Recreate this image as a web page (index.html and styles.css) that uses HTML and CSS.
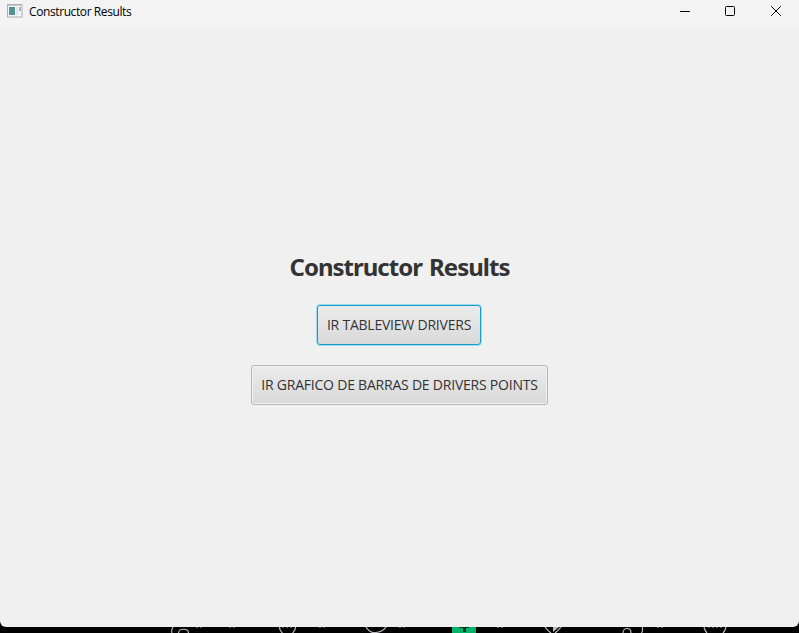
FILE: index.html
```html
<!DOCTYPE html>
<html lang="es">
<head>
<meta charset="utf-8">
<title>Constructor Results</title>
<link rel="stylesheet" href="styles.css">
</head>
<body>
<div class="window">
  <header class="titlebar">
    <svg class="app-icon" width="16" height="14" viewBox="0 0 16 14">
      <rect x=".5" y=".5" width="14.5" height="12.5" fill="#f4f6f7" stroke="#a9b0b5"/>
      <path d="M1 1.5h13.5" stroke="#c3c9cd"/>
      <rect x="2" y="3" width="6" height="8" fill="#4d9390"/>
      <path d="M2 3h2v8H2z" fill="#5c8fa5"/>
      <path d="M9 3h2v8H9z" fill="#dce6ec"/>
      <path d="M12 3h2v4h-2z" fill="#a8b4c0"/>
    </svg>
    <span class="title">Constructor Results</span>
    <div class="controls">
      <svg width="46" height="23" viewBox="0 0 46 23"><path d="M18 11.500h10" stroke="#000"/></svg>
      <svg width="46" height="23" viewBox="0 0 46 23"><rect x="17.500" y="6.500" width="9" height="9" rx="1" fill="none" stroke="#000"/></svg>
      <svg width="46" height="23" viewBox="0 0 46 23"><path d="M17.200 6.200l9.600 9.600M26.800 6.200l-9.600 9.600" stroke="#000"/></svg>
    </div>
  </header>
  <main class="content">
    <h1 class="heading">Constructor Results</h1>
    <button class="btn btn-focused"><span class="label">IR TABLEVIEW DRIVERS</span></button>
    <button class="btn btn-wide"><span class="label">IR GRAFICO DE BARRAS DE DRIVERS POINTS</span></button>
  </main>
</div>
<svg class="backdrop" width="799" height="6" viewBox="0 0 799 6">
  <path fill="#00b56a" d="M452 0h24v6h-24z"/>
  <path fill="#06391f" d="M463 0h3v5h-3zM459 0h10v1h-10z"/>
  <g fill="none" stroke="#b9bcbc" stroke-width="1.200">
    <path d="M173 0q-2 3-1 6M178.500 6c0-5 10-5 10 0M279.500 0q0 4 3 6M295.500 0q0 4-3 6M366 0c3 5 7 6 10 5.500 4-.5 8-2 10-5.500M545 0q3 4 6 6M561 0q-3 4-6 6M623 6c0-6 8-6 8 0M642.500 0v4l-1 2M704 0q1 4 3 6M726 0q-1 4-3 6"/>
    <path stroke="#555" stroke-dasharray="2 2" d="M282 .5h11M196 .5h6M229 .5h8M319 .5h8M399 .5h8M497 .5h8M657 .5h8M708 .5h14"/>
  </g>
  <path fill="#b9bcbc" d="M553 0h6l-6 5z"/>
</svg>
</body>
</html>
```
FILE: styles.css
```css
* { box-sizing: border-box; }
body {
  margin: 0;
  width: 799px;
  height: 633px;
  overflow: hidden;
  background: #000;
  font-family: "Noto Sans", sans-serif;
}
.window {
  height: 627px;
  display: flex;
  flex-direction: column;
  overflow: hidden;
  background: #f0f0f0;
  border-radius: 0 0 6px 6px;
}
.titlebar {
  flex: none;
  height: 28px;
  display: flex;
  align-items: flex-start;
  background: #f3f3f3;
}
.app-icon { margin: 4px 6px 0 7px; }
.title {
  font: 12px/24px "Open Sans", sans-serif;
  letter-spacing: -0.4px;
  color: #000;
  white-space: nowrap;
}
.controls { display: flex; margin: 0 -1px 0 auto; }
.controls svg { display: block; }
.content {
  display: flex;
  flex-direction: column;
  align-items: center;
  padding-top: 222px;
}
.heading {
  margin: 0 0 21px;
  font: bold 24px/34px "Noto Sans", sans-serif;
  letter-spacing: -1px;
  word-spacing: 2px;
  color: #333;
  white-space: nowrap;
}
.btn {
  width: 164px;
  height: 40px;
  padding: 0;
  border: 1px solid #b5b5b5;
  border-radius: 3px;
  background: linear-gradient(#ececec, #d9d9d9);
  box-shadow: inset 0 0 0 1px #f2f2f2;
  font: 14px/38px "Open Sans", sans-serif;
  color: #333;
  white-space: nowrap;
}
.btn-focused {
  margin-right: 1px;
  border-color: #159cca;
  box-shadow: 0 0 0 1px #9edcf0;
}
.btn-wide { width: 297px; margin-top: 20px; }
.label { letter-spacing: -0.22px; }
.backdrop { display: block; }
```
